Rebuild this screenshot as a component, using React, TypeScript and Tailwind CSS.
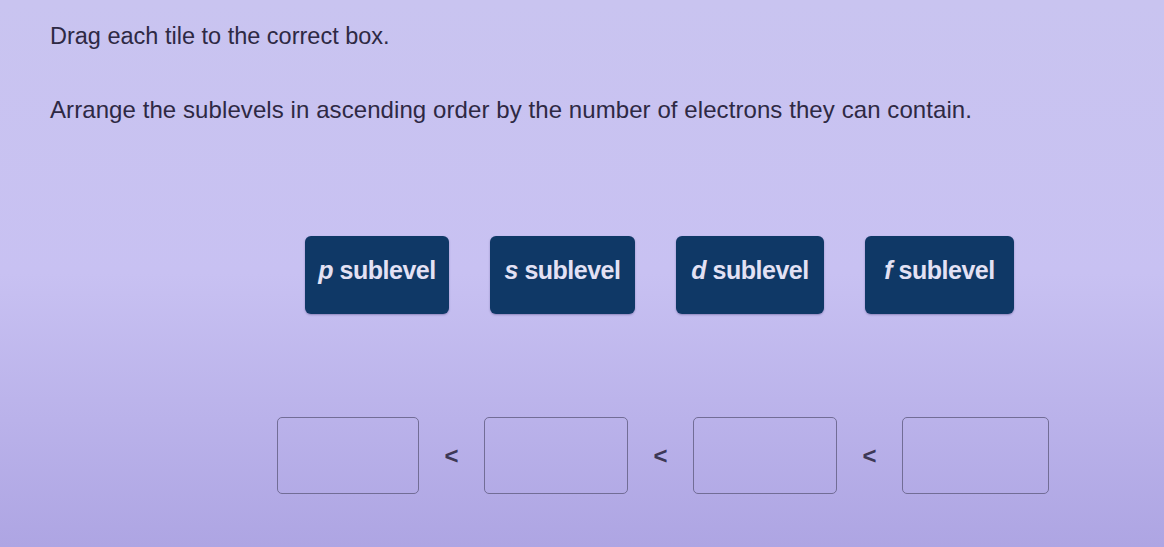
const tiles = [
  { letter: 'p', width: 'w-[144px]' },
  { letter: 's', width: 'w-[145px]' },
  { letter: 'd', width: 'w-[148px]' },
  { letter: 'f', width: 'w-[149px]' },
];

function Tile({ letter, width }: { letter: string; width: string }) {
  return (
    <div
      className={`${width} h-[78px] rounded-[6px] bg-[#0f3866] flex items-center justify-center pb-2 text-[25px] font-bold text-[#e3e1f4] tracking-[-0.5px] shadow-[0_1px_2px_rgba(40,30,90,0.35)]`}
    >
      <span>
        <i>{letter}</i> sublevel
      </span>
    </div>
  );
}

function DropBox({ width }: { width: string }) {
  return <div className={`${width} h-[77px] rounded-[5px] border-[1.5px] border-[#726d96]`} />;
}

function Less() {
  return (
    <span className="w-[13px] flex justify-center text-[24px] font-bold text-[#3d3856] leading-none">
      &lt;
    </span>
  );
}

export default function App() {
  return (
    <div
      className="w-[1164px] h-[547px] overflow-hidden bg-linear-to-b from-[#c9c4f0] via-[#c8c1f2] to-[#aea5e3] text-[#2e2944]"
      style={{ fontFamily: '"Liberation Sans", Arial, sans-serif' }}
    >
      <div className="pl-[50px] pt-[22px]">
        <p className="text-[23.5px] leading-[28px]">Drag each tile to the correct box.</p>
        <p className="mt-[46px] text-[24px] leading-[28px] tracking-[0.08px]">
          Arrange the sublevels in ascending order by the number of electrons they can contain.
        </p>
      </div>

      {/* tiles to drag */}
      <div className="mt-[112px] ml-[305px] flex gap-[41px]">
        {tiles.map((t) => (
          <Tile key={t.letter} letter={t.letter} width={t.width} />
        ))}
      </div>

      {/* ordered target boxes */}
      <div className="mt-[103px] ml-[277px] flex items-center gap-[26px]">
        <DropBox width="w-[142px]" />
        <Less />
        <DropBox width="w-[144px]" />
        <Less />
        <DropBox width="w-[144px]" />
        <Less />
        <DropBox width="w-[147px]" />
      </div>
    </div>
  );
}
